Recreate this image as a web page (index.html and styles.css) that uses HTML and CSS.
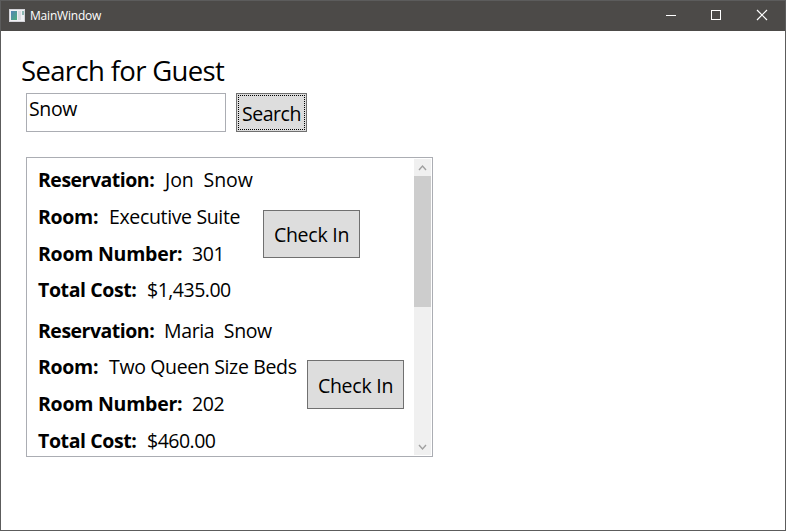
FILE: index.html
```html
<!DOCTYPE html>
<html lang="en">
<head>
<meta charset="utf-8">
<title>MainWindow</title>
<link rel="stylesheet" href="styles.css">
</head>
<body>
<div class="window">
  <header class="titlebar">
    <svg class="app-icon" width="16" height="13" viewBox="0 0 16 13">
      <defs><linearGradient id="pane" x1="0" y1="0" x2="1" y2="1"><stop offset="0" stop-color="#5584b8"/><stop offset="1" stop-color="#4fae7c"/></linearGradient></defs>
      <rect x=".5" y=".5" width="15" height="12" fill="#f1f1f4" stroke="#d5d5da"/>
      <rect x="2" y="2" width="6" height="9" fill="url(#pane)"/>
      <rect x="9" y="2" width="3" height="9" fill="#dcdce2"/>
      <rect x="13" y="2" width="2" height="4" fill="#8fb8b4"/>
    </svg>
    <span class="caption">MainWindow</span>
    <div class="controls">
      <svg width="46" height="30" viewBox="0 0 46 30"><path d="M17 14.500h10" stroke="#fff"/></svg>
      <svg width="46" height="30" viewBox="0 0 46 30"><rect x="16.500" y="9.500" width="9" height="9" fill="none" stroke="#fff"/></svg>
      <svg width="46" height="30" viewBox="0 0 46 30"><path d="M16 9l10 10M26 9l-10 10" stroke="#fff" stroke-width="1.200"/></svg>
    </div>
  </header>
  <main class="content">
    <h1 class="heading"><span>Search for Guest</span></h1>
    <div class="search">
      <div class="field"><span>Snow</span></div>
      <button class="btn search-btn"><span>Search</span></button>
    </div>
    <section class="list">
      <div class="items">
        <article class="item">
          <div class="details details-first">
            <p><b class="w-res">Reservation:</b><span class="v-jon">Jon&nbsp; Snow</span></p>
            <p><b class="w-room">Room:</b><span class="v-suite">Executive Suite</span></p>
            <p><b class="w-num">Room Number:</b><span class="v-no">301</span></p>
            <p><b class="w-cost">Total Cost:</b><span class="v-cost">$1,435.00</span></p>
          </div>
          <button class="btn check check-first"><span>Check In</span></button>
        </article>
        <article class="item">
          <div class="details details-second">
            <p><b class="w-res">Reservation:</b><span class="v-maria">Maria&nbsp; Snow</span></p>
            <p><b class="w-room">Room:</b><span class="v-beds">Two Queen Size Beds</span></p>
            <p><b class="w-num">Room Number:</b><span class="v-no">202</span></p>
            <p><b class="w-cost">Total Cost:</b><span class="v-cost">$460.00</span></p>
          </div>
          <button class="btn check"><span>Check In</span></button>
        </article>
      </div>
      <div class="scrollbar">
        <svg width="17" height="17" viewBox="0 0 17 17"><path d="M5 11l3.500-4 3.500 4" fill="none" stroke="#a0a0a0" stroke-width="1.400"/></svg>
        <div class="thumb"></div>
        <svg class="down" width="17" height="17" viewBox="0 0 17 17"><path d="M5 7l3.500 4 3.500-4" fill="none" stroke="#a0a0a0" stroke-width="1.400"/></svg>
      </div>
    </section>
  </main>
</div>
</body>
</html>
```
FILE: styles.css
```css
* { box-sizing: border-box; }
body { margin: 0; background: #fff; color: #000; font-family: "Open Sans", "Noto Sans", sans-serif; font-size: 19.5px; }
.window { width: 786px; height: 531px; border: 1px solid #5c5c5c; overflow: hidden; }
.titlebar { height: 30px; background: #4c4a48; display: flex; align-items: center; padding-left: 8px; }
.app-icon { margin-top: -2px; }
.caption { margin-left: 5px; color: #fff; font-size: 12px; line-height: 16px; letter-spacing: -.2px; }
.controls { margin-left: auto; margin-right: -2px; display: flex; }
.controls svg { display: block; }
.content { padding: 22px 0 0 20px; }
.heading { margin: 0; height: 40px; font-weight: 400; font-size: 27.5px; line-height: 36px; letter-spacing: -.65px; white-space: nowrap; }
.search { display: flex; gap: 10px; margin-left: 5px; height: 39px; }
.field { width: 200px; border: 1px solid #abadb3; padding: 1px 2px; line-height: 28px; letter-spacing: -.35px; }
.btn { font: inherit; color: #000; background: #ddd; border: 1px solid #707070; padding: 0; margin: 0; white-space: nowrap; text-align: center; letter-spacing: -.3px; }
.search-btn { width: 71px; padding: 1px 0 0; outline: 1px dotted #000; outline-offset: -3px; line-height: 27px; letter-spacing: -.45px; }
.list { margin: 25px 0 0 5px; width: 407px; height: 300px; border: 1px solid #abadb3; display: flex; justify-content: space-between; padding: 1px; overflow: hidden; }
.items { padding: 8.4px 0 0 10px; }
.item { display: flex; height: 150.4px; }
.details-first { width: 225px; }
.details-second { width: 269px; }
.details p { margin: 0 0 10px; height: 26.6px; line-height: 26.6px; display: flex; white-space: nowrap; }
.details b { font-weight: 700; flex: none; }
.w-res { width: 126px; letter-spacing: -.5px; }
.w-room { width: 71px; letter-spacing: -.3px; }
.w-num { width: 154px; letter-spacing: -.25px; }
.w-cost { width: 109px; letter-spacing: -.4px; }
.details span { letter-spacing: -.35px; }
.details .v-jon { letter-spacing: -.1px; padding-left: 1px; }
.details .v-cost { letter-spacing: -.5px; }
.check { width: 97px; height: 49px; margin-top: 42.2px; padding-top: 2px; letter-spacing: -.25px; }
.check-first { height: 48px; margin-top: 42.6px; }
.scrollbar { width: 17px; background: #f0f0f0; display: flex; flex-direction: column; }
.scrollbar svg { display: block; }
.thumb { height: 131px; background: #cdcdcd; }
.down { margin-top: auto; }
```
